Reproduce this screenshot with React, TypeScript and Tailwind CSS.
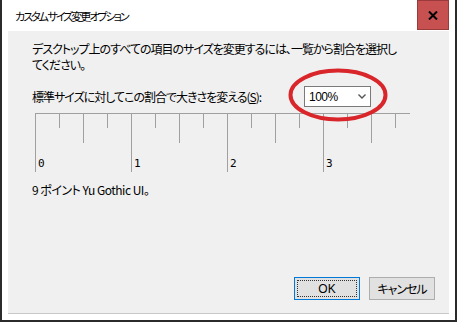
import React from "react";

const jp = "font-['Yu_Gothic_UI','Noto_Sans_CJK_JP',sans-serif] [font-feature-settings:'palt']";

function Ruler() {
  // 96px per inch, tick every quarter inch
  const ticks = Array.from({ length: 16 }, (_, k) => k);
  return (
    <svg width="380" height="62" className="block">
      <line x1="0" y1="0.5" x2="375" y2="0.5" stroke="#a0a0a0" />
      {ticks.map((k) => {
        const x = k * 24 + 0.5;
        const len = k % 4 === 0 ? 59 : k % 2 === 0 ? 30 : 15;
        return <line key={k} x1={x} y1="0" x2={x} y2={len} stroke="#a0a0a0" />;
      })}
      {[0, 1, 2, 3].map((n) => (
        <text
          key={n}
          x={n * 96 + 3}
          y="54"
          fontSize="11"
          fontFamily="DejaVu Sans Mono, monospace"
          fill="#000"
        >
          {n}
        </text>
      ))}
    </svg>
  );
}

function App() {
  return (
    <div className={`relative w-[457px] h-[322px] bg-white border-x-2 border-b-2 border-[#2b2b2b] flex flex-col text-black ${jp}`}>
      {/* title bar */}
      <div className="h-[31px] flex items-start shrink-0">
        <div className="text-[11px] tracking-[-2px] pl-[13px] pt-[8px] flex-1">カスタム サイズ変更オプション</div>
        <div className="w-[32px] h-[30px] mr-[6px] bg-[#c75050] border border-[#9a3a3a] flex items-center justify-center">
          <svg width="10" height="9" viewBox="0 0 10 9">
            <path d="M1 0.5 L9 8.5 M9 0.5 L1 8.5" stroke="#000" strokeWidth="2" />
          </svg>
        </div>
      </div>

      {/* client area */}
      <div className="flex-1 mx-[6px] bg-[#f0f0f0] border-b border-[#c8c8c8] flex flex-col">
        <div className="pl-[24px] pt-[10px] text-[12px] leading-[16px] tracking-[-1px]">
          <p>デスクトップ上のすべての項目のサイズを変更するには、一覧から割合を選択し</p>
          <p>てください。</p>
        </div>
        <div className="flex items-center pl-[24px] mt-[13px]">
          <span className="w-[272px] shrink-0 text-[12px] tracking-[-1px]">
            標準サイズに対してこの割合で大きさを変える(<span className="underline">S</span>):
          </span>
          <div className="w-[67px] h-[21px] bg-white border border-[#7a7a7a] flex items-center justify-between pl-[4px] pr-[4px]">
            <span className="text-[12px] tracking-[-0.5px] font-['Liberation_Sans',sans-serif]">100%</span>
            <svg width="8" height="5" viewBox="0 0 8 5">
              <path d="M0.5 0.5 L4 4 L7.5 0.5" stroke="#555" strokeWidth="1.4" fill="none" />
            </svg>
          </div>
        </div>
        <div className="pl-[27px] mt-[6px]">
          <Ruler />
        </div>
        <div className="pl-[24px] mt-[6px] text-[12px] tracking-[-0.5px]">9 ポイント Yu Gothic UI。</div>
        <div className="flex-1" />
        <div className="flex justify-end gap-[9px] pr-[14px] pb-[13px]">
          <button className="w-[66px] h-[23px] bg-[#e1e1e1] border border-[#0078d7] p-[2px]">
            <div className="w-full h-full border border-dotted border-[#333] flex items-center justify-center text-[12px] font-['Liberation_Sans',sans-serif]">
              OK
            </div>
          </button>
          <button className="w-[66px] h-[23px] bg-[#e1e1e1] border border-[#adadad] flex items-center justify-center text-[12px] tracking-[-1px]">
            キャンセル
          </button>
        </div>
      </div>
      <div className="h-[6px] shrink-0" />

      {/* red annotation ellipse */}
      <svg className="absolute left-[285px] top-[67px] pointer-events-none" width="102" height="56">
        <ellipse cx="51" cy="28" rx="47.5" ry="24.5" fill="none" stroke="#d9262b" strokeWidth="4" />
      </svg>
    </div>
  );
}

export default App;
